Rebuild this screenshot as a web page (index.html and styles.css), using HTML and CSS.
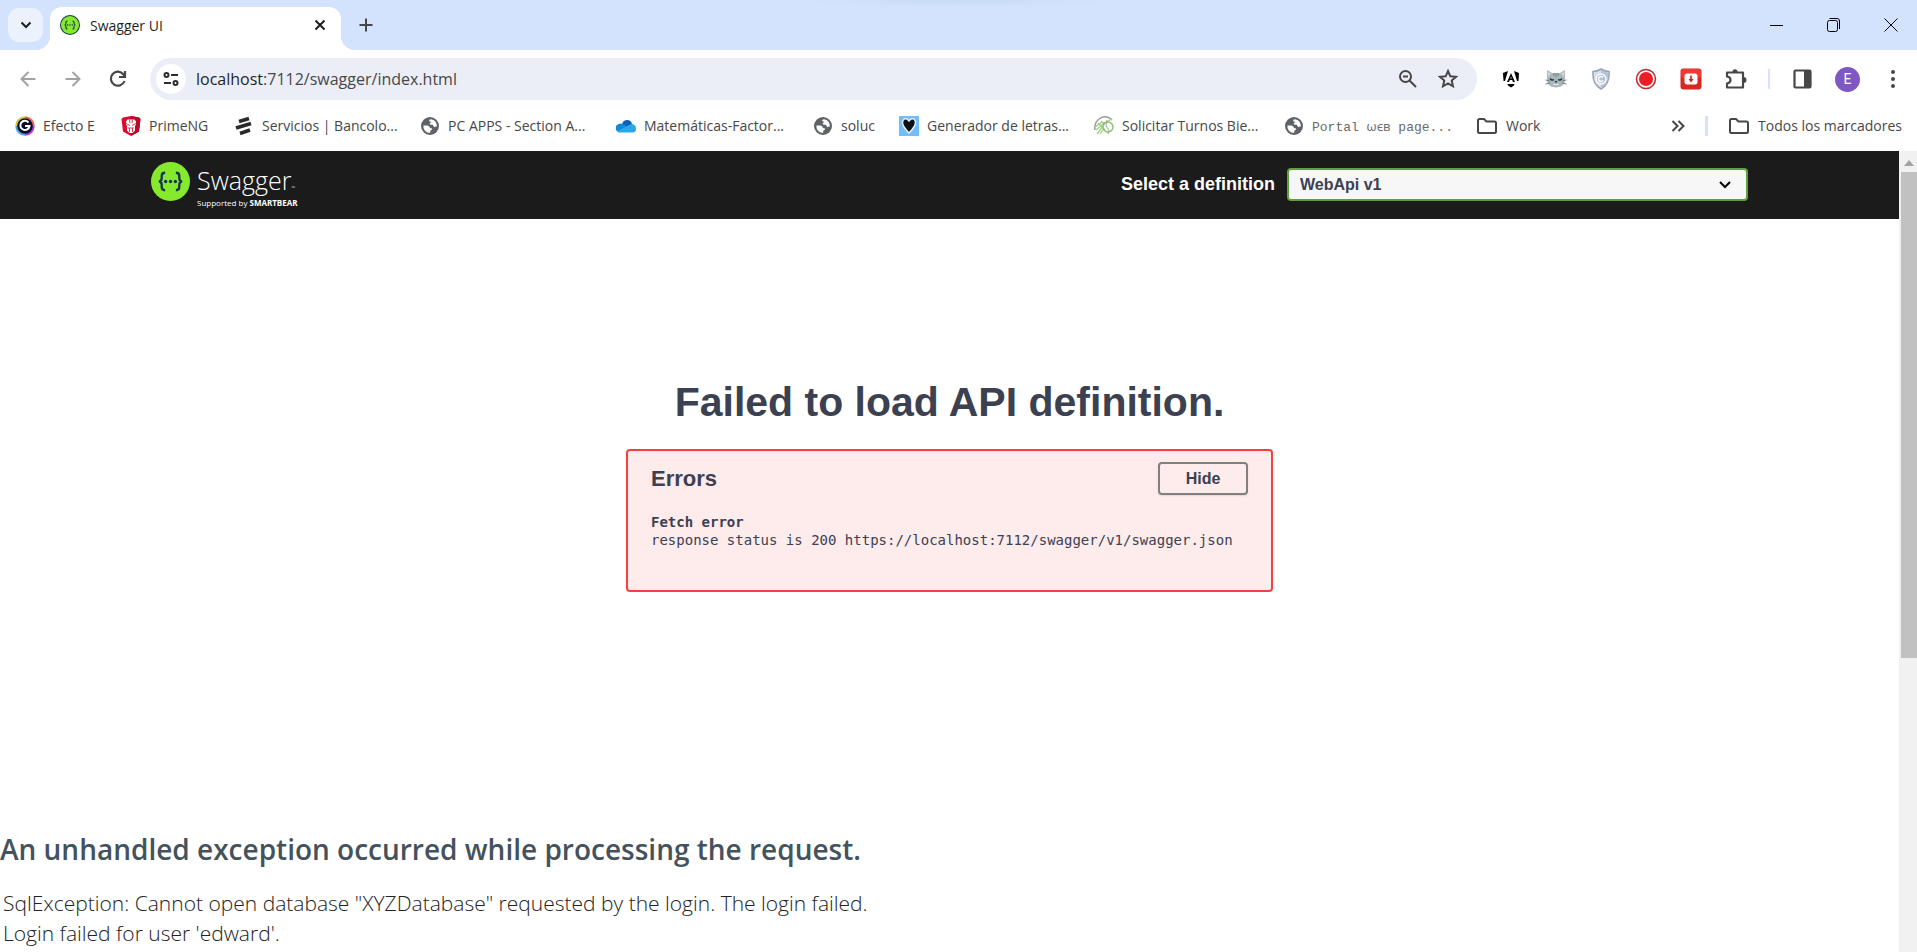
FILE: index.html
```html
<!DOCTYPE html>
<html lang="es">
<head>
<meta charset="utf-8">
<title>Swagger UI</title>
<link rel="stylesheet" href="styles.css">
</head>
<body>
<svg class="defs" aria-hidden="true">
  <symbol id="globe" viewBox="0 0 20 20"><circle cx="10" cy="10" r="9" fill="#5f6368"/><path d="M3.500 9.500 L7.500 9.500 Q10 10 10 12 L12 12.500 Q12.500 14 10.500 14.500 L10 17 Q5 16.500 3.500 12Z M11 3.200 Q9 3.500 9 5 L11.500 6 Q9 7 10 8.500 L13 9 L14 11 L16.800 10.500 Q17 6 13.500 4Z" fill="#fff"/></symbol>
  <symbol id="folder" viewBox="0 0 22 18"><path d="M2 3.500 Q2 2 3.500 2 H8 L10.500 4.500 H18.500 Q20 4.500 20 6 V14.500 Q20 16 18.500 16 H3.500 Q2 16 2 14.500Z" fill="none" stroke="#474747" stroke-width="2"/></symbol>
  <symbol id="swagger" viewBox="0 0 40 40"><circle cx="20" cy="20" r="20" fill="#85ea2d"/><path d="M14.500 11 Q11 11 11 14 V16.500 Q11 20 8 20 Q11 20 11 23.500 V26 Q11 29 14.500 29 M25.500 11 Q29 11 29 14 V16.500 Q29 20 32 20 Q29 20 29 23.500 V26 Q29 29 25.500 29" fill="none" stroke="#173647" stroke-width="2.400"/><g fill="#173647"><circle cx="15" cy="20" r="1.700"/><circle cx="20" cy="20" r="1.700"/><circle cx="25" cy="20" r="1.700"/></g></symbol>
</svg>

<header class="tabstrip">
  <button class="tab-search" aria-label="Buscar pestañas"><svg width="12" height="8" viewBox="0 0 12 8"><path d="M1.500 1.500 L6 6 L10.500 1.500" fill="none" stroke="#1f1f1f" stroke-width="2"/></svg></button>
  <div class="tab">
    <svg width="20" height="20" viewBox="0 0 20 20"><circle cx="10" cy="10" r="10" fill="#173647"/><use href="#swagger" x="1" y="1" width="18" height="18"/></svg>
    <span class="tab-title">Swagger UI</span>
    <button class="plain" aria-label="Cerrar pestaña"><svg width="12" height="12" viewBox="0 0 12 12"><path d="M1.500 1.500 L10.500 10.500 M10.500 1.500 L1.500 10.500" stroke="#1f1f1f" stroke-width="2"/></svg></button>
  </div>
  <button class="plain new-tab" aria-label="Nueva pestaña"><svg width="14" height="14" viewBox="0 0 14 14"><path d="M7 0.500 V13.500 M0.500 7 H13.500" stroke="#474747" stroke-width="2"/></svg></button>
  <div class="window-controls">
    <button class="plain" aria-label="Minimizar"><svg width="14" height="14" viewBox="0 0 14 14"><path d="M0 7.500 H13" stroke="#000"/></svg></button>
    <button class="plain" aria-label="Restaurar"><svg width="14" height="14" viewBox="0 0 14 14"><rect x="0.500" y="2.500" width="10" height="11" rx="2" fill="none" stroke="#000"/><path d="M2.500 0.500 H10 Q12.500 0.500 12.500 3 V11" fill="none" stroke="#000"/></svg></button>
    <button class="plain" aria-label="Cerrar"><svg width="14" height="14" viewBox="0 0 14 14"><path d="M0.500 0.500 L13.500 13.500 M13.500 0.500 L0.500 13.500" stroke="#000"/></svg></button>
  </div>
</header>

<nav class="toolbar">
  <div class="nav-buttons">
    <button class="plain" aria-label="Atrás"><svg width="16" height="16" viewBox="0 0 16 16"><path d="M15.500 8 H2 M8.500 1 L1.500 8 L8.500 15" fill="none" stroke="#a3a3a3" stroke-width="2"/></svg></button>
    <button class="plain" aria-label="Adelante"><svg width="16" height="16" viewBox="0 0 16 16"><path d="M0.500 8 H14 M7.500 1 L14.500 8 L7.500 15" fill="none" stroke="#a3a3a3" stroke-width="2"/></svg></button>
    <button class="plain" aria-label="Recargar"><svg width="18" height="18" viewBox="0 0 18 18"><path d="M15.500 11 A7 7 0 1 1 14.500 4.500 L15.500 6" fill="none" stroke="#474747" stroke-width="2.200"/><path d="M16 1 V7 H10" fill="none" stroke="#474747" stroke-width="2.200"/></svg></button>
  </div>
  <div class="omnibox">
    <button class="site-info" aria-label="Información del sitio"><svg width="16" height="14" viewBox="0 0 16 14"><g fill="none" stroke="#2d2d2d" stroke-width="2"><circle cx="3.500" cy="3" r="2"/><path d="M8 3 H15 M1 11 H8"/><circle cx="12.500" cy="11" r="2"/></g></svg></button>
    <div class="url"><span class="host">localhost</span>:7112/swagger/index.html</div>
    <button class="plain" aria-label="Zoom"><svg width="20" height="20" viewBox="0 0 20 20"><g fill="none" stroke="#474747" stroke-width="2"><circle cx="7.500" cy="7.500" r="5.500"/><path d="M11.500 11.500 L18 18 M5 7.500 H10"/></g></svg></button>
    <button class="plain" aria-label="Añadir a marcadores"><svg width="20" height="20" viewBox="0 0 20 20"><path d="M10 2 L12.300 7.300 L18 7.800 L13.700 11.500 L15 17.300 L10 14.300 L5 17.300 L6.300 11.500 L2 7.800 L7.700 7.300Z" fill="none" stroke="#474747" stroke-width="2"/></svg></button>
  </div>
  <div class="extensions">
    <button class="plain" aria-label="Angular DevTools"><svg width="18" height="18" viewBox="0 0 18 18"><path d="M1 3 L6 1 L3 11 L1.500 11Z M17 3 L12 1 L15 11 L16.500 11Z M9 3 L13 12 H11 L10.200 10 H7.800 L7 12 H5Z M5.500 14 H12.500 L12 15.500 L9 17.500 L6 15.500Z"/><path d="M8.300 8.500 L9 6.500 L9.700 8.500Z" fill="#fff"/></svg></button>
    <button class="plain" aria-label="Gato"><svg width="22" height="20" viewBox="0 0 22 20"><path d="M2 1 L7 4 H15 L20 1 L20 9 Q21 18 11 18.500 Q1 18 2 9Z" fill="#a9b6ba"/><path d="M2.500 2 L6 5 L3 8Z M19.500 2 L16 5 L19 8Z" fill="#d0d6d8"/><path d="M9 4 V7 M11 4 V8 M13 4 V7 M0.500 11 L5 12 M0.500 15 L5 14 M21.500 11 L17 12 M21.500 15 L17 14" stroke="#77858a"/><path d="M5 9.500 Q7 12 9 10.500 M13 10.500 Q15 12 17 9.500" fill="none" stroke="#24364a" stroke-width="1.500"/><path d="M9.500 12 H12.500 L11 14Z" fill="#24364a"/><path d="M8 15 Q11 17 14 15" fill="none" stroke="#eee"/></svg></button>
    <button class="plain" aria-label="Escudo"><svg width="18" height="22" viewBox="0 0 18 22"><path d="M9 1 Q13 3.500 17 3.500 Q18 16 9 21 Q0 16 1 3.500 Q5 3.500 9 1Z" fill="#d5def0" stroke="#98a3b5" stroke-width="1.500"/><path d="M9 2 Q13 4.500 16 4.500 Q17 15 9 20Z" fill="#b4c0dc"/><circle cx="9" cy="11" r="5" fill="#b6bfd2" stroke="#fff" stroke-width="1.400"/><path d="M11 9.500 A2.500 2.500 0 1 0 11 12.500" fill="none" stroke="#fff" stroke-width="1.500"/></svg></button>
    <button class="plain" aria-label="Grabar"><svg width="22" height="22" viewBox="0 0 22 22"><circle cx="11" cy="11" r="9.500" fill="#fff" stroke="#c1272d" stroke-width="1.500"/><circle cx="11" cy="11" r="7" fill="#ee1c25"/></svg></button>
    <button class="plain" aria-label="Descargar vídeo"><svg width="22" height="22" viewBox="0 0 22 22"><rect x="0.500" y="0.500" width="21" height="21" rx="3" fill="#d6281f"/><rect x="1" y="1" width="20" height="9" rx="3" fill="#ee3a30"/><rect x="4.500" y="5.500" width="13" height="11" rx="2.500" fill="#fff"/><path d="M11 7.500 V12" stroke="#c9211a" stroke-width="1.600"/><path d="M8.500 11 H13.500 L11 14.500Z" fill="#c9211a"/></svg></button>
    <button class="plain" aria-label="Extensiones"><svg width="22" height="22" viewBox="0 0 22 22"><path d="M2 4.500 H18 V19.500 H2 V15.500 Q5.500 15 5.500 12 Q5.500 9 2 8.500Z" fill="none" stroke="#474747" stroke-width="2.200" stroke-linejoin="round"/><path d="M7.500 4 A2.500 2.800 0 0 1 12.500 4Z M18.500 9 A2.800 2.800 0 0 1 18.500 15Z" fill="#474747"/></svg></button>
  </div>
  <span class="divider"></span>
  <div class="profile">
    <button class="plain" aria-label="Panel lateral"><svg width="19" height="20" viewBox="0 0 19 20"><rect x="1.500" y="1.500" width="16" height="17" rx="1" fill="none" stroke="#474747" stroke-width="2.200"/><path d="M11 2 H17.500 V18 H11Z" fill="#474747"/></svg></button>
    <button class="avatar" aria-label="Perfil">E</button>
    <button class="plain" aria-label="Menú"><svg width="6" height="20" viewBox="0 0 6 20"><g fill="#474747"><circle cx="3" cy="3" r="2"/><circle cx="3" cy="10" r="2"/><circle cx="3" cy="17" r="2"/></g></svg></button>
  </div>
</nav>

<nav class="bookmarks" aria-label="Marcadores">
  <div class="bookmark-list">
    <a href="#"><svg width="20" height="20" viewBox="0 0 20 20"><g fill="none" stroke-width="2.500"><path d="M10 1.500 A8.500 8.500 0 0 1 18.500 10" stroke="#f06a5a"/><path d="M18.500 10 A8.500 8.500 0 0 1 10 18.500" stroke="#b43cf0"/><path d="M10 18.500 A8.500 8.500 0 0 1 1.500 10" stroke="#4da8f5"/><path d="M1.500 10 A8.500 8.500 0 0 1 10 1.500" stroke="#d8c832"/></g><circle cx="10" cy="10" r="7.800" fill="#0b0d2b"/><path d="M13.500 6.500 A4.600 4.600 0 1 0 14.500 10 H10" fill="none" stroke="#fff" stroke-width="2"/></svg>Efecto E</a>
    <a href="#"><svg width="20" height="20" viewBox="0 0 20 20"><path d="M2 1.500 L10 0 L18 1.500 L19.500 3 L18 15.500 L10 20 L2 15.500 L0.500 3Z" fill="#dd0a2e"/><path d="M10 0 L18 1.500 L19.500 3 L18 15.500 L10 20Z" fill="#bd0728"/><path d="M6.500 3.500 H13.500 L15 5.500 V8.500 L14 10 V14.500 L11.500 17 H8.500 L6 14.500 V10 L5 8.500 V5.500Z" fill="#fff"/><path d="M8.500 3.500 L9 7 M11.500 3.500 L11 7 M5 7.500 L9 9.500 M15 7.500 L11 9.500 M7 12 H13 M8.500 12 V16 M11.500 12 V16" stroke="#d5405a"/></svg>PrimeNG</a>
    <a href="#"><svg width="20" height="20" viewBox="0 0 20 20"><g stroke="#2c2a29" stroke-width="3.600"><path d="M5 5.500 L15 2.500 M2 12 L17 7.500 M6 17.500 L16 14"/></g></svg>Servicios | Bancolo...</a>
    <a href="#"><svg width="20" height="20"><use href="#globe"/></svg>PC APPS - Section A...</a>
    <a href="#"><svg width="20" height="20" viewBox="0 0 20 20"><path d="M6 10 Q6 4 11 4 Q15 4 16 8 L17 11 L8 12Z" fill="#0a62b8"/><path d="M4.500 16 A4 4 0 0 1 1 9 Q4 6 9 9 L13 12Z" fill="#1587d8"/><path d="M15 8 Q20 8 20 13 Q20 16 17 16.500 H4 Q2 16.500 1.500 15 Z" fill="#28a8ea"/></svg>Matemáticas-Factor...</a>
    <a href="#"><svg width="20" height="20"><use href="#globe"/></svg>soluc</a>
    <a href="#"><svg width="20" height="20" viewBox="0 0 20 20"><path d="M0 0 H20 V20 H0Z" fill="#73bdfb"/><path d="M10 17 Q3 10 3.500 6 Q4.500 2 8 3 L10 5 L12 3 Q15.500 2 16.500 6 Q17 10 10 17Z" fill="#0a1218" stroke="#e4f2ff" stroke-width="1.500"/></svg>Generador de letras...</a>
    <a href="#"><svg width="20" height="20" viewBox="0 0 20 20"><g fill="none"><path d="M1 14 Q0 7 5 3 Q12 -2 18 4" stroke="#9a9e98" stroke-width="1.500"/><path d="M2 14 L10 7 L18 3 M3 18 L9 10 M6 18 L10 12 M1 11 L8 6 M4 7 L11 14" stroke="#a4ce83" stroke-width="1.300"/><circle cx="14" cy="11" r="5" stroke="#86c465" stroke-width="1.400"/><path d="M13 4 L12 10 L15 14 L14 18 M7 5 L11 8" stroke="#9ba698"/></g></svg>Solicitar Turnos Bie...</a>
    <a href="#"><svg width="20" height="20"><use href="#globe"/></svg><span class="typed">Portal <span class="greek">ωєв</span> page...</span></a>
    <a href="#"><svg width="22" height="18"><use href="#folder"/></svg>Work</a>
  </div>
  <button class="plain more" aria-label="Más marcadores"><svg width="14" height="12" viewBox="0 0 14 12"><path d="M1.500 1 L6.500 6 L1.500 11 M7.500 1 L12.500 6 L7.500 11" fill="none" stroke="#474747" stroke-width="2"/></svg></button>
  <span class="divider"></span>
  <a class="all" href="#"><svg width="22" height="18"><use href="#folder"/></svg>Todos los marcadores</a>
</nav>

<div class="viewport">
  <div class="page">
    <header class="topbar">
      <a class="brand" href="#" aria-label="Swagger">
        <svg width="39" height="39"><use href="#swagger"/></svg>
        <span class="brand-text">
          <span class="brand-name">Swagger<small>™</small></span>
          <span class="brand-sub">Supported by <b>SMARTBEAR</b></span>
        </span>
      </a>
      <form class="definition">
        <label for="def">Select a definition</label>
        <span class="select">
          <select id="def"><option>WebApi v1</option></select>
          <svg width="12" height="8" viewBox="0 0 12 8"><path d="M1 1 L6 6 L11 1" fill="none" stroke="#000" stroke-width="2"/></svg>
        </span>
      </form>
    </header>
    <main class="failure">
      <h1>Failed to load API definition.</h1>
      <section class="errors">
        <div class="errors-head">
          <h2>Errors</h2>
          <button class="hide">Hide</button>
        </div>
        <div class="errors-body">
          <strong>Fetch error</strong>
          <span>response status is 200 https://localhost:7112/swagger/v1/swagger.json</span>
        </div>
      </section>
    </main>
    <section class="exception">
      <h2>An unhandled exception occurred while processing the request.</h2>
      <p>SqlException: Cannot open database "XYZDatabase" requested by the login. The login failed.<br>Login failed for user 'edward'.</p>
    </section>
  </div>
  <div class="scrollbar"><svg width="10" height="6" viewBox="0 0 10 6"><path d="M0 6 L5 0 L10 6Z" fill="#a3a3a3"/></svg><span class="thumb"></span></div>
</div>
</body>
</html>
```
FILE: styles.css
```css
* { box-sizing: border-box; }
body {
  margin: 0;
  height: 100vh;
  display: flex;
  flex-direction: column;
  overflow: hidden;
  background: #fff;
  color: #474747;
  font-family: "Open Sans", "Noto Sans", sans-serif;
  font-size: 14px;
}
h1, h2, p { margin: 0; }
svg { flex: none; display: block; }
a { color: inherit; text-decoration: none; }
.defs { position: absolute; width: 0; height: 0; }
button { padding: 0; border: 0; font: inherit; }
.plain { background: none; display: grid; place-items: center; }

/* tab strip */
.tabstrip {
  flex: none;
  height: 50px;
  display: flex;
  align-items: center;
  padding-left: 8px;
  background: radial-gradient(ellipse 160px 8px at 50% 0, #c8daf5, #d3e3fd);
}
.tab-search {
  width: 35px;
  height: 34px;
  border-radius: 11px;
  background: #ebf1fd;
  display: grid;
  place-items: center;
}
.tab {
  position: relative;
  align-self: flex-end;
  width: 291px;
  height: 43px;
  margin-left: 7px;
  padding: 0 15px 7px 10px;
  display: flex;
  align-items: center;
  gap: 10px;
  background: #fff;
  border-radius: 12px 12px 0 0;
  color: #1f1f1f;
}
.tab::before, .tab::after {
  content: "";
  position: absolute;
  bottom: 0;
  width: 14px;
  height: 14px;
}
.tab::before { left: -14px; background: radial-gradient(circle at 0 0, transparent 14px, #fff 14px); }
.tab::after { right: -14px; background: radial-gradient(circle at 100% 0, transparent 14px, #fff 14px); }
.tab-title { flex: 1; }
.new-tab { margin-left: 18px; }
.window-controls {
  margin-left: auto;
  margin-right: -2px;
  display: grid;
  grid-template-columns: repeat(3, 57px);
}

/* toolbar */
.toolbar {
  flex: none;
  height: 58px;
  display: flex;
  align-items: center;
  padding: 0 2px 0 5px;
  background: #fff;
}
.nav-buttons { display: grid; grid-template-columns: repeat(3, 45px); }
.omnibox {
  flex: 1;
  height: 42px;
  margin-left: 10px;
  padding: 0 19px 0 6px;
  display: flex;
  align-items: center;
  gap: 20px;
  border-radius: 21px;
  background: #ebeef7;
}
.site-info {
  width: 30px;
  height: 30px;
  border-radius: 50%;
  background: #fff;
  display: grid;
  place-items: center;
}
.url { flex: 1; margin-left: -10px; font-size: 16px; }
.host { color: #1f1f1f; }
.extensions { margin-left: 11px; display: grid; grid-template-columns: repeat(6, 45px); }
.divider { width: 2px; height: 20px; background: #d3e3fd; }
.toolbar .divider { margin: 0 10px; }
.profile { display: grid; grid-template-columns: repeat(3, 45px); justify-items: center; align-items: center; }
.avatar {
  width: 25px;
  height: 25px;
  border-radius: 50%;
  background: #7e57c2;
  color: #fff;
  font: 14px Roboto, sans-serif;
}

/* bookmarks */
.bookmarks {
  flex: none;
  height: 43px;
  display: flex;
  align-items: center;
  padding: 0 15px 8px;
}
.bookmarks a { display: flex; align-items: center; gap: 8px; white-space: nowrap; }
.bookmark-list {
  display: grid;
  grid-template-columns: 106px 113px 186px 196px 197px 86px 195px 190px 192px 80px;
}
.typed { font-family: "Liberation Mono", monospace; font-size: 13px; color: #6a6a6a; }
.greek { font-family: "Open Sans", sans-serif; }
.more { margin-left: auto; }
.bookmarks .divider { margin: 0 20px; width: 3px; }

/* web page */
.viewport { flex: 1; min-height: 0; display: flex; }
.page { flex: 1; overflow: hidden; }
.scrollbar {
  width: 18px;
  padding-left: 2px;
  display: flex;
  flex-direction: column;
  align-items: center;
  background: #f1f1f1;
}
.scrollbar svg { flex: none; margin: 9px 0 6px; }
.thumb { width: 100%; flex: 0 0 486px; background: #c1c1c1; }
.topbar {
  height: 68px;
  padding: 0 151px;
  display: flex;
  align-items: center;
  justify-content: space-between;
  background: #1b1b1b;
  color: #fff;
}
.brand { display: flex; align-items: flex-start; gap: 7px; }
.brand-text { display: flex; flex-direction: column; }
.brand-name { font-size: 25px; font-weight: 300; line-height: 36px; }
.brand-name small { font-size: 5px; line-height: 1; }
.brand-sub { font-size: 8px; line-height: 10px; }
.definition {
  display: flex;
  align-items: center;
  gap: 12px;
  padding-bottom: 1px;
  font: bold 18px "Liberation Sans", Arial, sans-serif;
}
.select { display: grid; align-items: center; width: 461px; }
.select > * { grid-area: 1 / 1; }
.select svg { justify-self: end; margin-right: 17px; pointer-events: none; }
select {
  width: 100%;
  height: 33px;
  padding: 0 11px;
  appearance: none;
  border: 2px solid #62a03f;
  border-radius: 4px;
  background: #f7f7f7;
  color: #3b4151;
  font: bold 16px "Liberation Sans", Arial, sans-serif;
}
.failure {
  padding-top: 158px;
  height: 609px;
  display: flex;
  flex-direction: column;
  align-items: center;
  color: #3b4151;
  font-family: "Liberation Sans", Arial, sans-serif;
}
.failure h1 { font-size: 41px; line-height: 50px; }
.errors {
  width: 647px;
  margin-top: 22px;
  padding: 11px 23px 41px;
  border: 2px solid #f93e3e;
  border-radius: 4px;
  background: #feebeb;
}
.errors-head { display: flex; justify-content: space-between; align-items: center; }
.errors-head h2 { font-size: 22px; }
.hide {
  width: 90px;
  height: 33px;
  border: 2px solid #808080;
  border-radius: 4px;
  background: transparent;
  box-shadow: 0 1px 2px rgba(0, 0, 0, .1);
  color: #3b4151;
  font-weight: bold;
  font-size: 16px;
  font-family: inherit;
}
.errors-body {
  padding-top: 18px;
  display: flex;
  flex-direction: column;
  font: 14px/18px "DejaVu Sans Mono", monospace;
}
.exception h2 { color: #44525e; font-size: 28px; font-weight: 600; line-height: 42px; }
.exception p { margin: 18px 0 0 3px; color: #222; font-size: 21px; font-weight: 300; line-height: 30px; }
```
